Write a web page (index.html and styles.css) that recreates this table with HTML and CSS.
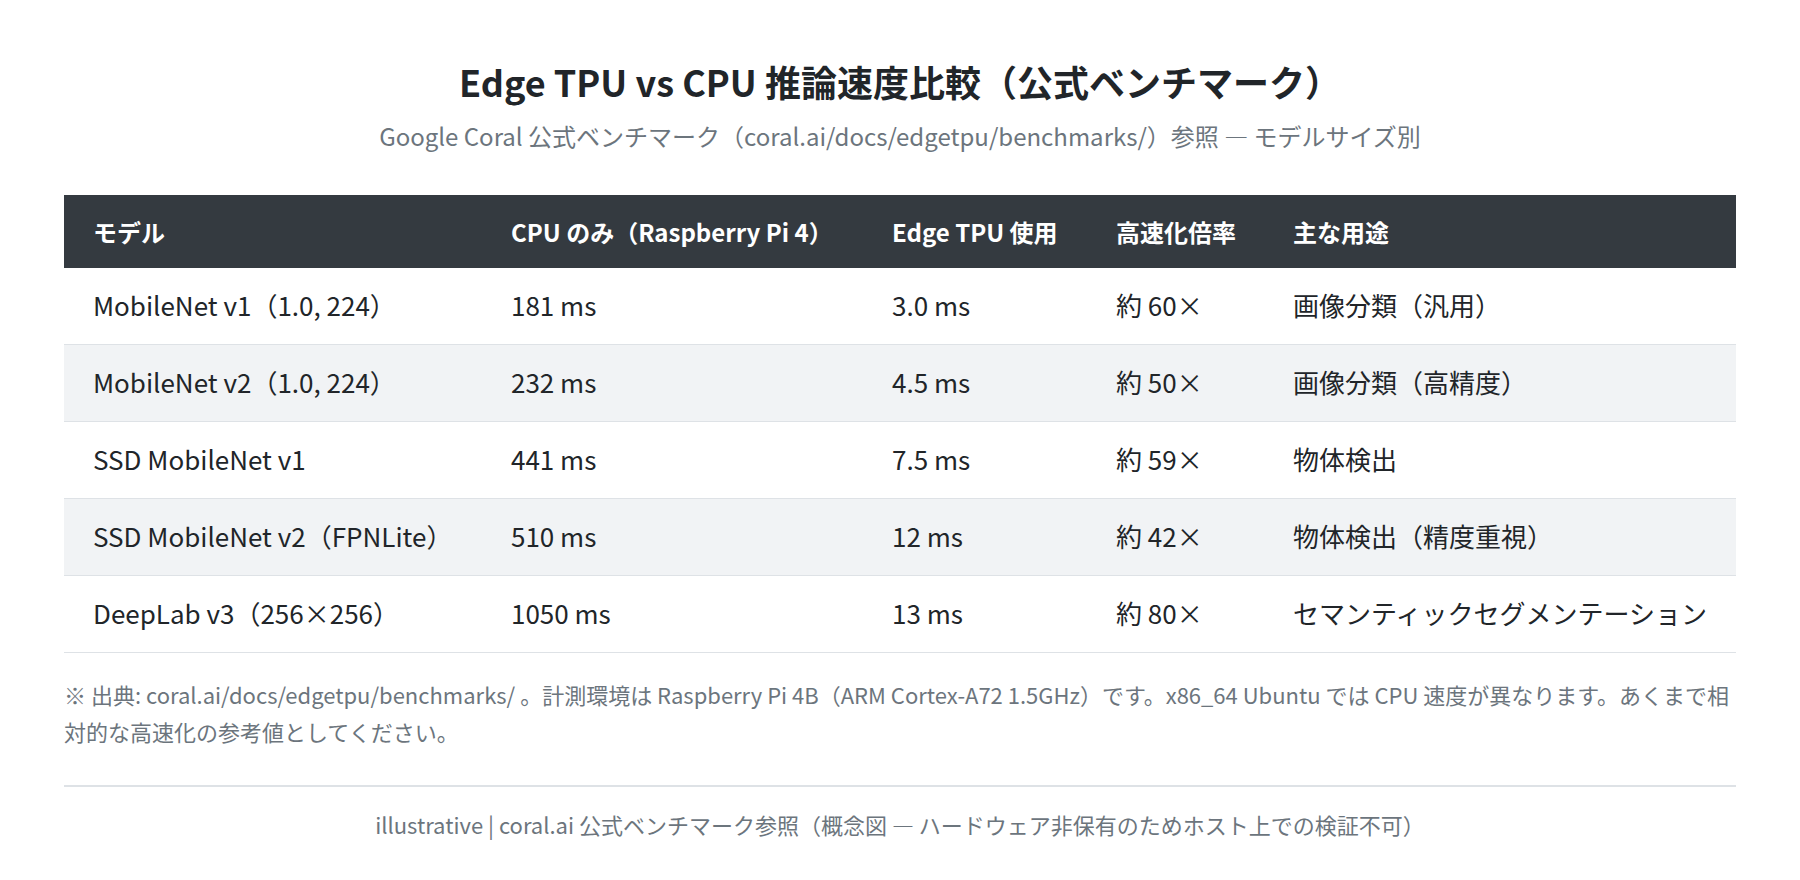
FILE: index.html
```html
<!DOCTYPE html>
<html lang="ja">
<head>
<meta charset="utf-8">
<title>Edge TPU vs CPU 推論速度比較</title>
<link rel="stylesheet" href="styles.css">
</head>
<body>
<main class="page">
  <header class="head">
    <h1 class="title">Edge TPU vs CPU 推論速度比較（公式ベンチマーク）</h1>
    <p class="subtitle">Google Coral 公式ベンチマーク（coral.ai/docs/edgetpu/benchmarks/）参照 — モデルサイズ別</p>
  </header>
  <table class="bench">
    <colgroup>
      <col class="c1"><col class="c2"><col class="c3"><col class="c4"><col class="c5">
    </colgroup>
    <thead>
      <tr><th>モデル</th><th>CPU のみ（Raspberry Pi 4）</th><th>Edge TPU 使用</th><th>高速化倍率</th><th>主な用途</th></tr>
    </thead>
    <tbody>
      <tr><td>MobileNet v1（1.0, 224）</td><td>181 ms</td><td>3.0 ms</td><td>約 60×</td><td>画像分類（汎用）</td></tr>
      <tr><td>MobileNet v2（1.0, 224）</td><td>232 ms</td><td>4.5 ms</td><td>約 50×</td><td>画像分類（高精度）</td></tr>
      <tr><td>SSD MobileNet v1</td><td>441 ms</td><td>7.5 ms</td><td>約 59×</td><td>物体検出</td></tr>
      <tr><td>SSD MobileNet v2（FPNLite）</td><td>510 ms</td><td>12 ms</td><td>約 42×</td><td>物体検出（精度重視）</td></tr>
      <tr><td>DeepLab v3（256×256）</td><td>1050 ms</td><td>13 ms</td><td>約 80×</td><td>セマンティックセグメンテーション</td></tr>
    </tbody>
  </table>
  <p class="note">※ 出典: coral.ai/docs/edgetpu/benchmarks/ 。計測環境は Raspberry Pi 4B（ARM Cortex-A72 1.5GHz）です。x86_64 Ubuntu では CPU 速度が異なります。あくまで相対的な高速化の参考値としてください。</p>
  <footer class="foot">illustrative | coral.ai 公式ベンチマーク参照（概念図 — ハードウェア非保有のためホスト上での検証不可）</footer>
</main>
</body>
</html>
```
FILE: styles.css
```css
html, body {
  margin: 0;
  padding: 0;
  background: #ffffff;
}
body {
  font-family: "Noto Sans CJK JP", "Noto Sans", sans-serif;
  color: #212529;
}
.page {
  padding: 56px 64px 30px;
}
.head {
  text-align: center;
}
.title {
  margin: 0;
  font-size: 36px;
  line-height: 50px;
  font-weight: 700;
  color: #212529;
}
.subtitle {
  margin: 13px 0 0;
  font-size: 24px;
  line-height: 34px;
  color: #6c757d;
}
.bench {
  margin-top: 42px;
  width: 100%;
  border-collapse: collapse;
  table-layout: fixed;
}
.c1 { width: 418px; }
.c2 { width: 381px; }
.c3 { width: 224px; }
.c4 { width: 177px; }
.c5 { width: auto; }
.bench th {
  background: #343a40;
  color: #ffffff;
  font-size: 24px;
  font-weight: 700;
  text-align: left;
  height: 73px;
  padding: 0 0 0 29px;
  white-space: nowrap;
}
.bench td {
  font-size: 26px;
  height: 73px;
  padding: 0 0 3px 29px;
  border-bottom: 1px solid #dee2e6;
  white-space: nowrap;
}
.bench tbody tr:nth-child(even) td {
  background: #f1f3f5;
}
.note {
  margin: 23px 0 0;
  font-size: 22px;
  line-height: 37px;
  color: #6c757d;
}
.foot {
  margin-top: 35px;
  border-top: 2px solid #dee2e6;
  padding-top: 21px;
  text-align: center;
  font-size: 22px;
  line-height: 32px;
  color: #6c757d;
}
```
